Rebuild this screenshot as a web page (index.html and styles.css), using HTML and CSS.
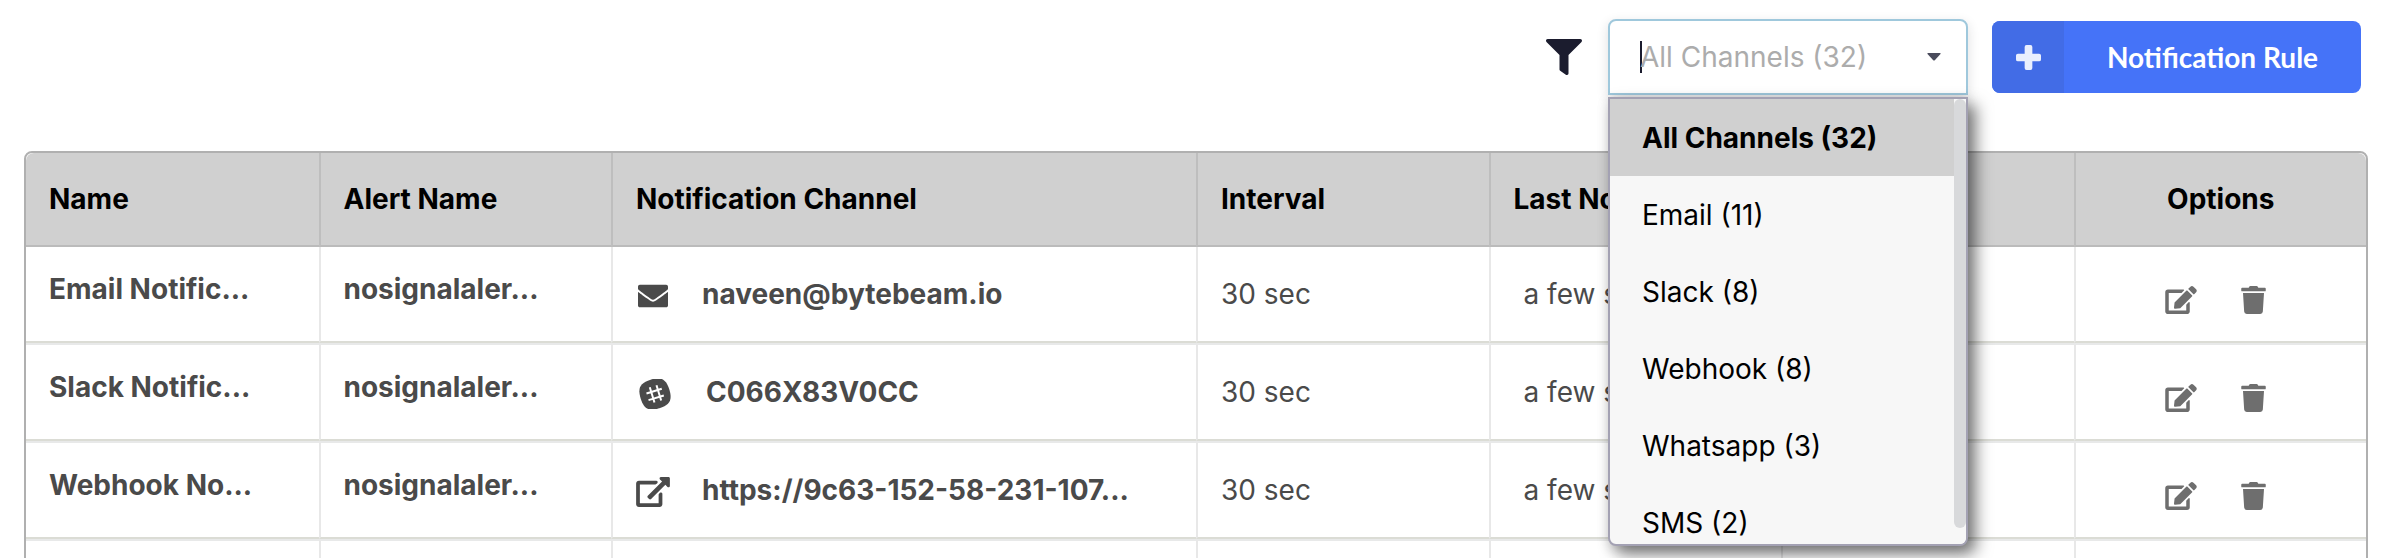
FILE: index.html
```
<!DOCTYPE html>
<html lang="en">

<head>
    <meta charset="UTF-8">
    <meta name="viewport" content="width=device-width, initial-scale=1.0">
    <title>Notification Rules</title>
    <link rel="stylesheet" href="styles.css">
</head>

<body>
    <!-- shared icons -->
    <svg class="sprite" aria-hidden="true">
        <symbol id="edit" viewBox="0 0 576 512">
            <path d="M402.6 83.2l90.2 90.2c3.8 3.8 3.8 10 0 13.8L274.4 405.6l-92.8 10.3c-12.4 1.4-22.9-9.1-21.5-21.5l10.3-92.8L388.8 83.2c3.8-3.8 10-3.8 13.8 0zm162-22.9l-48.8-48.8c-15.2-15.2-39.9-15.2-55.2 0l-35.4 35.4c-3.8 3.8-3.8 10 0 13.8l90.2 90.2c3.8 3.8 10 3.8 13.8 0l35.4-35.4c15.2-15.3 15.2-40 0-55.2zM384 346.2V448H64V128h229.8c3.2 0 6.2-1.3 8.5-3.5l40-40c7.6-7.6 2.2-20.5-8.5-20.5H48C21.5 64 0 85.5 0 112v352c0 26.5 21.5 48 48 48h352c26.5 0 48-21.5 48-48V306.2c0-10.7-12.9-16-20.5-8.5l-40 40c-2.2 2.3-3.5 5.3-3.5 8.5z"/>
        </symbol>
        <symbol id="trash" viewBox="0 0 448 512">
            <path d="M432 32H312l-9.4-18.7A24 24 0 0 0 281.1 0H166.8a23.72 23.72 0 0 0-21.4 13.3L136 32H16A16 16 0 0 0 0 48v32a16 16 0 0 0 16 16h416a16 16 0 0 0 16-16V48a16 16 0 0 0-16-16zM32 128l21.2 339a48 48 0 0 0 47.9 45h245.8a48 48 0 0 0 47.9-45L416 128z"/>
        </symbol>
    </svg>

    <div class="page">
        <div class="toolbar">
            <svg class="filter-icon" viewBox="0 0 512 512" aria-hidden="true">
                <path d="M488 0H24C2.7 0-8 25.9 7 41l185 185v206c0 8 4 15 10 20l80 56c16 11 38 0 38-20V226L505 41c15-15 4-41-17-41z"/>
            </svg>

            <div class="dropdown">
                <div class="dropdown-box">
                    <span class="cursor"></span>
                    <input class="search" id="channel" type="text" role="combobox" aria-label="Channel" aria-expanded="true" aria-controls="channel_list" placeholder="All Channels (32)">
                    <svg class="arrow" viewBox="0 0 14 8" aria-hidden="true"><path d="M1 0h12q1 0 .5 1L8 7q-1 1-2 0L.5 1Q0 0 1 0z"/></svg>
                </div>
                <div class="menu">
                    <ul class="menu-list" id="channel_list" role="listbox" aria-label="Channels">
                        <li class="item selected" role="option" aria-selected="true">All Channels (32)</li>
                        <li class="item" role="option">Email (11)</li>
                        <li class="item" role="option">Slack (8)</li>
                        <li class="item" role="option">Webhook (8)</li>
                        <li class="item" role="option">Whatsapp (3)</li>
                        <li class="item" role="option">SMS (2)</li>
                    </ul>
                    <div class="track"><div class="thumb"></div></div>
                </div>
            </div>

            <button class="add-rule">
                <span class="add-icon">
                    <svg viewBox="0 0 26 26" aria-hidden="true"><path d="M11 0h4q2 0 2 2v7h7q2 0 2 2v4q0 2-2 2h-7v7q0 2-2 2h-4q-2 0-2-2v-7H2q-2 0-2-2v-4q0-2 2-2h7V2q0-2 2-2z"/></svg>
                </span>
                <span class="add-label">Notification Rule</span>
            </button>
        </div>

        <div class="table-wrap">
            <table class="rules">
                <colgroup>
                    <col><col><col class="wide"><col><col><col><col>
                </colgroup>
                <thead>
                    <tr>
                        <th>Name</th>
                        <th>Alert Name</th>
                        <th>Notification Channel</th>
                        <th>Interval</th>
                        <th>Last Notified</th>
                        <th></th>
                        <th class="center">Options</th>
                    </tr>
                </thead>
                <tbody>
                    <tr>
                        <td><div class="name">Email Notific...</div></td>
                        <td><div class="name">nosignalaler...</div></td>
                        <td>
                            <div class="channel">
                                <svg class="channel-icon" viewBox="0 0 34 30" aria-hidden="true"><path transform="translate(2) scale(.0586)" d="M502.3 190.8c3.9-3.1 9.7-.2 9.7 4.7V416c0 17-14 32-32 32H32c-18 0-32-15-32-32V195.6c0-5 5.7-7.8 9.7-4.7 22.4 17.4 52.1 39.5 154.1 113.6 21.1 15.4 56.7 47.8 92.2 47.6 35.7.3 72-32.8 92.3-47.6 102-74.1 131.6-96.3 154-113.7zM256 320c23.2.4 56.6-29.2 73.4-41.4 132.7-96.3 142.8-104.7 173.4-128.7 5.8-4.5 9.2-11.5 9.2-18.9V96c0-17-14-32-32-32H32C14 64 0 79 0 96v35c0 7.4 3.4 14.3 9.2 18.9 30.6 23.9 40.7 32.4 173.4 128.7 16.8 12.2 50.2 41.8 73.4 41.4z"/></svg>
                                <span>naveen@bytebeam.io</span>
                            </div>
                        </td>
                        <td>30 sec</td>
                        <td><div class="when">a few seconds ago</div></td>
                        <td></td>
                        <td>
                            <div class="options">
                                <button class="option" aria-label="Edit"><svg class="edit"><use href="#edit"/></svg></button>
                                <button class="option" aria-label="Delete"><svg class="trash"><use href="#trash"/></svg></button>
                            </div>
                        </td>
                    </tr>
                    <tr>
                        <td><div class="name">Slack Notific...</div></td>
                        <td><div class="name">nosignalaler...</div></td>
                        <td>
                            <div class="channel slack">
                                <svg class="channel-icon" viewBox="-17 -15 34 30" aria-hidden="true">
                                    <g transform="rotate(-17)">
                                        <path d="M0-15C11-15 15-11 15 0S11 15 0 15-15 11-15 0-11-15 0-15z"/>
                                        <path class="hash" d="M-3-8V8M4-8V8M-8-3H8M-8 4H8"/>
                                    </g>
                                </svg>
                                <span>C066X83V0CC</span>
                            </div>
                        </td>
                        <td>30 sec</td>
                        <td><div class="when">a few seconds ago</div></td>
                        <td></td>
                        <td>
                            <div class="options">
                                <button class="option" aria-label="Edit"><svg class="edit"><use href="#edit"/></svg></button>
                                <button class="option" aria-label="Delete"><svg class="trash"><use href="#trash"/></svg></button>
                            </div>
                        </td>
                    </tr>
                    <tr>
                        <td><div class="name">Webhook No...</div></td>
                        <td><div class="name">nosignalaler...</div></td>
                        <td>
                            <div class="channel">
                                <svg class="channel-icon" viewBox="0 0 576 512" aria-hidden="true"><path d="M576 24v127.984c0 21.461-25.96 31.98-40.971 16.971l-35.707-35.709-243.523 243.523c-9.373 9.373-24.568 9.373-33.941 0l-22.627-22.627c-9.373-9.373-9.373-24.569 0-33.941L442.756 76.676l-35.703-35.705C391.982 25.9 402.656 0 424.024 0H552c13.255 0 24 10.745 24 24zM407.029 270.794l-16 16A23.999 23.999 0 0 0 384 303.765V448H64V128h264a24.003 24.003 0 0 0 16.97-7.029l16-16C376.089 89.851 365.381 64 344 64H48C21.49 64 0 85.49 0 112v352c0 26.51 21.49 48 48 48h352c26.51 0 48-21.49 48-48V287.764c0-21.382-25.852-32.09-40.971-16.97z"/></svg>
                                <span>https://9c63-152-58-231-107...</span>
                            </div>
                        </td>
                        <td>30 sec</td>
                        <td><div class="when">a few seconds ago</div></td>
                        <td></td>
                        <td>
                            <div class="options">
                                <button class="option" aria-label="Edit"><svg class="edit"><use href="#edit"/></svg></button>
                                <button class="option" aria-label="Delete"><svg class="trash"><use href="#trash"/></svg></button>
                            </div>
                        </td>
                    </tr>
                    <tr>
                        <td></td><td></td><td></td><td></td><td></td><td></td><td></td>
                    </tr>
                </tbody>
            </table>
        </div>
    </div>
</body>

</html>
```
FILE: styles.css
```
* {
    box-sizing: border-box;
}

body {
    margin: 0;
    background-color: #ffffff;
    font-family: Inter, "Liberation Sans", sans-serif;
    font-size: 28px;
    line-height: 34px;
    color: #4a4a4a;
}

button,
input {
    font: inherit;
    border: none;
    padding: 0;
    background: none;
}

button {
    cursor: pointer;
}

.sprite {
    display: none;
}

.page {
    height: 100vh;
    overflow: hidden;
}

.toolbar {
    display: flex;
    justify-content: flex-end;
    align-items: center;
    gap: 24px;
    padding: 19px 41px 56px 24px;
}

.filter-icon {
    width: 36px;
    height: 36px;
    margin-right: 2px;
    fill: #1b1c2e;
}

/* channel dropdown */
.dropdown {
    position: relative;
    width: 360px;
}

.dropdown-box {
    display: flex;
    align-items: center;
    height: 76px;
    padding: 0 25px 0 30px;
    border: 2px solid #9fc8dc;
    border-radius: 8px 8px 0 0;
    background-color: #ffffff;
    box-shadow: 0 4px 12px rgba(34, 36, 38, 0.15);
}

.cursor {
    width: 2px;
    height: 32px;
    margin-right: -2px;
    background-color: #1b1c2e;
}

.search {
    flex: 1;
    min-width: 0;
    outline: none;
}

.search::placeholder {
    color: #acacac;
    opacity: 1;
}

.arrow {
    width: 14px;
    height: 8px;
    fill: #4a4b5c;
}

.menu {
    position: absolute;
    z-index: 1;
    top: 78px;
    left: 0;
    width: 100%;
    height: 449px;
    display: flex;
    overflow: hidden;
    border: 2px solid #a3a1b3;
    border-radius: 0 0 8px 8px;
    background-color: #f7f7f7;
    box-shadow: 8px 8px 16px rgba(0, 0, 0, 0.5), 0 4px 12px rgba(34, 36, 38, 0.15);
}

.menu-list {
    flex: 1;
    margin: 0;
    padding: 0;
    list-style: none;
}

.item {
    height: 77px;
    padding: 22px 32px;
    color: #000000;
}

.item.selected {
    background-color: #d0d0d0;
    font-weight: 700;
}

.track {
    width: 12px;
    background-color: #f7f7f7;
}

.thumb {
    height: 429px;
    border-radius: 6px;
    background-color: #d8d9db;
}

/* add button */
.add-rule {
    display: flex;
    width: 369px;
    height: 72px;
    border-radius: 8px;
    overflow: hidden;
    background-color: #4573f8;
    color: #ffffff;
    font-family: Lato, sans-serif;
    font-weight: 700;
}

.add-rule:hover {
    background-color: #3564ea;
}

.add-icon {
    display: flex;
    align-items: center;
    justify-content: center;
    width: 72px;
    height: 100%;
    background-color: #426ce6;
}

.add-icon svg {
    width: 25px;
    height: 25px;
    fill: #e9effe;
}

.add-label {
    flex: 1;
    align-self: center;
    text-align: center;
}

/* rules table */
.table-wrap {
    padding: 0 34px 0 24px;
}

.rules {
    width: 100%;
    table-layout: fixed;
    border: 2px solid #b0b0b0;
    border-radius: 8px;
    border-collapse: separate;
    border-spacing: 0;
}

.wide {
    width: 25%;
}

th,
td {
    padding: 0 23px;
    text-align: left;
    white-space: nowrap;
    overflow: hidden;
}

th {
    height: 94px;
    border-left: 2px solid #bebebe;
    border-bottom: 2px solid #bbbbbb;
    background-color: #d0d0d0;
    color: #000000;
    font-weight: 700;
}

th:first-child {
    border-radius: 8px 0 0 0;
}

th:last-child {
    border-radius: 0 8px 0 0;
}

td {
    height: 98px;
    border-top: 2px solid #e8e9e9;
    border-left: 2px solid #e8e8e8;
    border-bottom: 2px solid #dbdcd5;
}

tbody tr:first-child td {
    height: 96px;
    border-top: none;
}

th:first-child,
td:first-child {
    border-left: none;
}

.center {
    text-align: center;
}

.name {
    padding-bottom: 10px;
    font-weight: 700;
}

.channel {
    display: flex;
    align-items: center;
    gap: 32px;
    font-weight: 700;
}

.channel-icon {
    width: 34px;
    height: 30px;
    margin-top: 4px;
    fill: #4a4a4a;
}

.slack {
    gap: 34px;
    padding-left: 2px;
}

.hash {
    fill: none;
    stroke: #ffffff;
    stroke-width: 2;
}

.when {
    padding-left: 10px;
}

.options {
    display: flex;
    justify-content: center;
    gap: 32px;
    padding-top: 12px;
}

.option {
    display: flex;
    justify-content: center;
    width: 33px;
    margin-right: 7px;
    fill: #6e6e6e;
}

.edit {
    width: 32px;
    height: 28px;
}

.trash {
    width: 25px;
    height: 28px;
}
```
